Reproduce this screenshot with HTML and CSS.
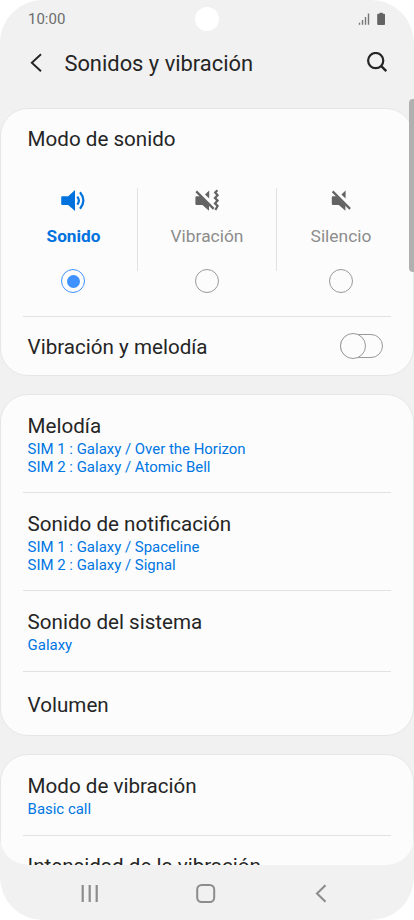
FILE: index.html
```html
<!DOCTYPE html>
<html lang="es">

<head>
  <meta charset="UTF-8">
  <meta name="viewport" content="width=device-width, initial-scale=1">
  <title>Sonidos y vibración</title>
  <link rel="stylesheet" href="styles.css">
</head>

<body>
  <div class="phone">
    <div class="status">
      <span class="time">10:00</span>
      <span class="camera"></span>
      <svg class="status-icons" width="28" height="14" viewBox="0 0 28 14">
        <path d="M1.500 10.800v2M4.500 8v4.800M7.500 5v7.800M10.500 1.600v11.200" fill="none" stroke="#777" stroke-width="1.400"/>
        <path d="M21.900 .8h2.400q.4 0 .6 1h1.200q.9 0 .9.900v9.400q0 .9-.9.900h-6q-.9 0-.9-.9V2.700q0-.9.9-.9h1.200q.2-1 .6-1z" fill="#636363"/>
      </svg>
    </div>

    <header class="header">
      <svg class="back" width="14" height="20" viewBox="0 0 14 20">
        <path d="M12 1.200L2.800 9.700l9.200 8.600" fill="none" stroke="#252525" stroke-width="1.900"/>
      </svg>
      <h1>Sonidos y vibración</h1>
      <svg class="search" width="22" height="22" viewBox="0 0 22 22">
        <circle cx="9.700" cy="8.600" r="7.600" fill="none" stroke="#252525" stroke-width="2.200"/>
        <path d="M14.800 13.700l5.500 5.500" stroke="#252525" stroke-width="2.400"/>
      </svg>
    </header>

    <main class="content">
      <section class="card sound">
        <h2>Modo de sonido</h2>
        <div class="modes">
          <div class="mode active">
            <svg width="26" height="24" viewBox="0 0 26 24">
              <path d="M2.200 8.200H8.200L15 2v21L8.200 17H2.200q-1 0-1-1V9.200q0-1 1-1z" fill="#0072de"/>
              <path d="M17.300 8.600q3.200 4 0 8M20 4.200q6.800 8.300 0 16.600" fill="none" stroke="#0072de" stroke-width="2.200"/>
            </svg>
            <span class="mode-name">Sonido</span>
            <span class="radio"></span>
          </div>
          <div class="mode">
            <svg width="26" height="24" viewBox="0 0 26 24">
              <path d="M2.600 8.200H6L15 17.200v5.600L8.400 17H2.600q-1.200 0-1.200-1.200V9.400q0-1.200 1.200-1.200zM15.200 2.400v8.200L11 6.400z" fill="#636363"/>
              <path d="M2.200 3.400l17.500 17.500" stroke="#636363" stroke-width="2.200"/>
              <path d="M23.400 2.200l-2.200 2.400 2.400 2.600-2.600 2.800 2.600 2.600-2.600 2.800 2.600 2.600-2.200 4" fill="none" stroke="#636363" stroke-width="2.200"/>
            </svg>
            <span class="mode-name">Vibración</span>
            <span class="radio"></span>
          </div>
          <div class="mode">
            <svg width="26" height="24" viewBox="0 0 26 24">
              <path d="M5 8.200h3.400L17.400 17.200v5.600L10.800 17H5q-1.200 0-1.200-1.200V9.400q0-1.200 1.200-1.200zM17.600 2.400v8.200l-4.200-4.200z" fill="#636363"/>
              <path d="M4.600 3.400l17.500 17.500" stroke="#636363" stroke-width="2.200"/>
            </svg>
            <span class="mode-name">Silencio</span>
            <span class="radio"></span>
          </div>
        </div>
        <div class="row switch-row">
          <span class="name">Vibración y melodía</span>
          <span class="switch"><span class="knob"></span></span>
        </div>
      </section>

      <section class="card">
        <div class="row two">
          <span class="name">Melodía</span>
          <span class="value">SIM 1 : Galaxy / Over the Horizon</span>
          <span class="value">SIM 2 : Galaxy / Atomic Bell</span>
        </div>
        <div class="row two">
          <span class="name">Sonido de notificación</span>
          <span class="value">SIM 1 : Galaxy / Spaceline</span>
          <span class="value">SIM 2 : Galaxy / Signal</span>
        </div>
        <div class="row one">
          <span class="name">Sonido del sistema</span>
          <span class="value">Galaxy</span>
        </div>
        <div class="row volume">
          <span class="name">Volumen</span>
        </div>
      </section>

      <section class="card last">
        <div class="row one">
          <span class="name">Modo de vibración</span>
          <span class="value">Basic call</span>
        </div>
        <div class="row">
          <span class="name">Intensidad de la vibración</span>
        </div>
      </section>
    </main>

    <nav class="nav">
      <svg width="20" height="20" viewBox="0 0 20 20">
        <path d="M2.700 2v17M9.700 2v17M16.700 2v17" stroke="#8c8c8c" stroke-width="2.200"/>
      </svg>
      <svg width="20" height="20" viewBox="0 0 20 20">
        <rect x="1.200" y="2" width="17" height="17" rx="4.500" fill="none" stroke="#8c8c8c" stroke-width="2"/>
      </svg>
      <svg width="20" height="20" viewBox="0 0 20 20">
        <path d="M14.500 2.300l-8.500 8.200 8.500 8.200" fill="none" stroke="#8c8c8c" stroke-width="2.100"/>
      </svg>
    </nav>
    <div class="scrollbar"></div>
  </div>
</body>

</html>
```

FILE: styles.css
```css
html,
body {
  margin: 0;
  padding: 0;
  background: #fff;
}

body {
  font-family: Roboto, "Liberation Sans", sans-serif;
  color: #252525;
}

svg {
  display: block;
  flex: none;
}

.phone {
  position: relative;
  display: flex;
  flex-direction: column;
  width: 414px;
  height: 920px;
  overflow: hidden;
  border-radius: 43px;
  background: #f1f1f1;
}

.status {
  display: grid;
  grid-template-columns: 1fr 24px 1fr;
  align-items: center;
  height: 38px;
  padding: 0 28px;
}

.time {
  font-size: 15px;
  line-height: 18px;
  color: #6c6c6c;
}

.camera {
  width: 24px;
  height: 24px;
  border-radius: 50%;
  background: #fff;
}

.status-icons {
  justify-self: end;
}

.header {
  display: flex;
  align-items: center;
  height: 50px;
  padding: 0 26px 20px 29px;
}

h1 {
  flex: 1;
  margin: 1px 0 0 21.400px;
  font-size: 21.900px;
  line-height: 26px;
  font-weight: normal;
}

.content {
  height: 757px;
  overflow: hidden;
  border-radius: 0 0 28px 28px;
}

.card {
  box-sizing: border-box;
  margin-bottom: 18px;
  border: 1px solid #e6e6e6;
  border-radius: 28px;
  background: #fcfcfc;
}

.sound {
  height: 268px;
}

h2 {
  margin: 17px 0 0 26.600px;
  font-size: 20.600px;
  line-height: 26px;
  font-weight: normal;
}

.modes {
  display: grid;
  grid-template-columns: 136px 139px 129px;
  margin-top: 36px;
  height: 128px;
}

.mode {
  display: flex;
  flex-direction: column;
  align-items: center;
  height: 83px;
  font-size: 17.400px;
  color: #8c8c8c;
}

.mode:nth-child(1) {
  padding-left: 8px;
}

.mode + .mode {
  border-left: 1px solid #e2e2e2;
}

.mode-name {
  margin-top: 14px;
  line-height: 20px;
}

.radio {
  box-sizing: border-box;
  flex: none;
  width: 24px;
  height: 24px;
  margin-top: 23px;
  border: 1px solid #999;
  border-radius: 50%;
}

.active .mode-name {
  padding-left: 1px;
  font-size: 17.200px;
  font-weight: bold;
  color: #0072de;
}

.active .radio {
  padding: 4.500px;
  border-color: #3e91ff;
  background: #3e91ff content-box;
}

.row {
  display: flex;
  flex-direction: column;
  margin: 0 22px;
  padding: 18px 5px 0 4.600px;
}

.row + .row,
.switch-row {
  border-top: 1px solid #e2e2e2;
}

.name {
  font-size: 20.600px;
  line-height: 26px;
}

.name + .value {
  margin-top: 2px;
}

.value {
  font-size: 14.950px;
  line-height: 17.600px;
  color: #0076e3;
}

.two {
  height: 79px;
}

.one {
  height: 62px;
}

.volume {
  padding-top: 20px;
  height: 43px;
}

.switch-row {
  flex-direction: row;
  justify-content: space-between;
  padding: 17px 8px 0 4.600px;
}

.switch {
  box-sizing: border-box;
  width: 43px;
  height: 24px;
  border: 1px solid #999;
  border-radius: 12px;
}

.knob {
  display: block;
  box-sizing: border-box;
  width: 26px;
  height: 26px;
  margin: -2px 0 0 -1px;
  border: 1px solid #999;
  border-radius: 50%;
  background: #fcfcfc;
}

.last .row + .row {
  padding-top: 17px;
}

.nav {
  display: flex;
  justify-content: space-between;
  padding: 18px 83px 0 80px;
}

.scrollbar {
  position: absolute;
  top: 99px;
  right: 0;
  width: 5px;
  height: 173px;
  border-radius: 4px 0 0 4px;
  background: #b0b0b0;
}
```
